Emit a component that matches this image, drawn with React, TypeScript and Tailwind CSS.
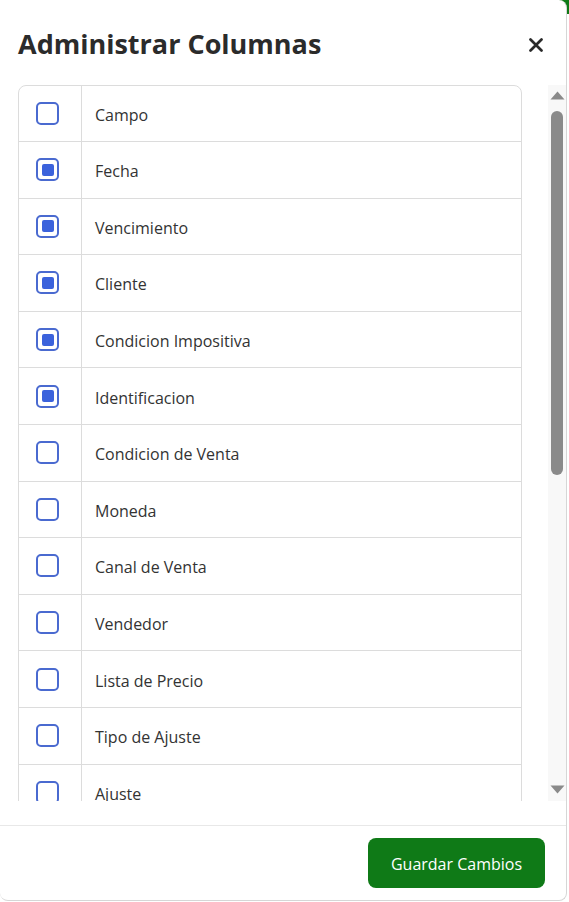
import React from "react";

const rows: { label: string; checked: boolean }[] = [
  { label: "Campo", checked: false },
  { label: "Fecha", checked: true },
  { label: "Vencimiento", checked: true },
  { label: "Cliente", checked: true },
  { label: "Condicion Impositiva", checked: true },
  { label: "Identificacion", checked: true },
  { label: "Condicion de Venta", checked: false },
  { label: "Moneda", checked: false },
  { label: "Canal de Venta", checked: false },
  { label: "Vendedor", checked: false },
  { label: "Lista de Precio", checked: false },
  { label: "Tipo de Ajuste", checked: false },
  { label: "Ajuste", checked: false },
  { label: "Total", checked: false },
];

function Check({ checked }: { checked: boolean }) {
  return (
    <div className="flex h-[23px] w-[23px] items-center justify-center rounded-[5px] border-2 border-[#4a6ad0] bg-white">
      {checked && <div className="h-[12px] w-[12px] rounded-[2px] bg-[#3b62dc]" />}
    </div>
  );
}

export default function App() {
  return (
    <div
      className="relative h-[902px] w-[569px] overflow-hidden bg-white"
      style={{ fontFamily: '"Open Sans", "Noto Sans", sans-serif' }}
    >
      <div className="absolute right-0 top-0 h-[14px] w-[14px] bg-[#0e7a16]" />
      <div className="relative flex h-[901px] w-[567px] flex-col rounded-[8px] border-b border-r border-[#d6d6d6] bg-white">
        <div className="flex h-[85px] items-start justify-between pl-[18px] pr-[18px] pt-[26px]">
          <h2 className="text-[27px] font-bold leading-[36px] text-[#2b2b2b]">
            Administrar Columnas
          </h2>
          <button className="mt-[7px] flex h-[24px] w-[24px] items-center justify-center text-[#222]">
            <svg width="14" height="14" viewBox="0 0 14 14">
              <path d="M1.5 1.5 L12.5 12.5 M12.5 1.5 L1.5 12.5" stroke="#2a2a2a" strokeWidth="2.7" strokeLinecap="round" />
            </svg>
          </button>
        </div>
        <div className="flex h-[716px] pl-[18px]">
          <div className="w-[505px] overflow-hidden">
            <div className="rounded-t-[8px] border border-[#dcdcdc]">
              {rows.map((r, i) => (
                <div
                  key={r.label}
                  className={
                    i > 0
                      ? "flex h-[56.6px] border-t border-[#dcdcdc]"
                      : "flex h-[55px]"
                  }
                >
                  <div className="flex w-[63px] shrink-0 items-center justify-center border-r border-[#dcdcdc] pr-[5px]">
                    <Check checked={r.checked} />
                  </div>
                  <div className="flex items-center pl-[13px] pt-[3px] text-[16px] text-[#333]">{r.label}</div>
                </div>
              ))}
            </div>
          </div>
          <div className="ml-[26px] flex w-[18px] flex-col items-center bg-[#f8f8f8] pt-[6px]">
            <svg width="15" height="9" viewBox="0 0 15 9">
              <path d="M7.5 0.5 L14.5 8.5 L0.5 8.5 Z" fill="#8a8a8a" />
            </svg>
            <div className="mt-[11px] h-[364px] w-[12px] rounded-full bg-[#8a8a8a]" />
            <div className="flex-1" />
            <svg width="15" height="9" viewBox="0 0 15 9" className="mb-[7px]">
              <path d="M0.5 0.5 L14.5 0.5 L7.5 8.5 Z" fill="#8a8a8a" />
            </svg>
          </div>
        </div>
        <div className="mt-[24px] flex flex-1 items-start justify-end border-t border-[#e8e8e8] pr-[21px] pt-[12px]">
          <button className="h-[50px] w-[177px] rounded-[8px] bg-[#0f7a17] pt-[2px] text-[16px] text-white">
            Guardar Cambios
          </button>
        </div>
      </div>
    </div>
  );
}
